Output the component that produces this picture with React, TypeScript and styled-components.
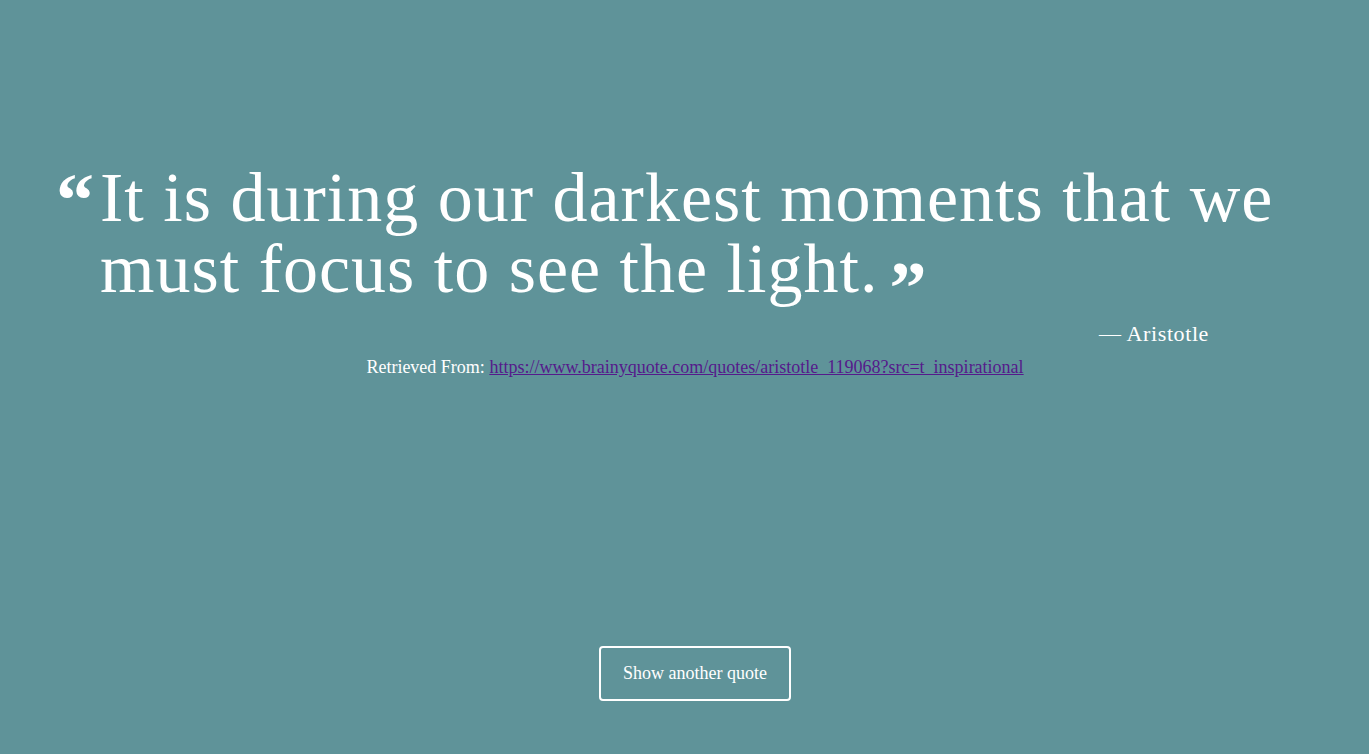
import React from "react";
import styled, { createGlobalStyle } from "styled-components";

const Global = createGlobalStyle`
  html, body { margin: 0; padding: 0; background: #5f9399; }
  body { font-family: "Liberation Serif", "DejaVu Serif", serif; color: #fff; }
`;

const Page = styled.main`
  box-sizing: border-box;
  width: 100%;
  height: 754px;
  padding: 162px 0 0 21px;
  display: flex;
  flex-direction: column;
  align-items: center;
`;

const QuoteBlock = styled.section`
  box-sizing: border-box;
  width: 100%;
  padding: 0 40px 0 35px;
  display: flex;
  align-items: flex-start;
  gap: 6px;
`;

const OpenMark = styled.span`
  display: block;
  font-weight: 700;
  font-size: 76px;
  line-height: 1;
`;

const CloseMark = styled.span`
  display: inline-block;
  font-weight: 700;
  font-size: 74px;
  line-height: 0;
  margin-left: 11px;
  vertical-align: -21px;
  letter-spacing: 0;
`;

const QuoteText = styled.blockquote`
  margin: 0;
  font-size: 70px;
  line-height: 71px;
  letter-spacing: 1px;
`;

const Author = styled.p`
  align-self: flex-end;
  margin: 17px 160px 0 0;
  font-size: 22px;
  letter-spacing: 0.6px;
`;

const Source = styled.p`
  margin: 10px 0 0;
  font-size: 18px;
  a { color: #551a8b; }
`;

const Button = styled.button`
  margin-top: 268px;
  width: 192px;
  height: 55px;
  background: transparent;
  border: 2px solid #fff;
  border-radius: 4px;
  color: #fff;
  font-family: "Liberation Serif", serif;
  font-size: 18px;
  cursor: pointer;
`;

export default function App() {
  return (
    <>
      <Global />
      <Page>
        <QuoteBlock>
          <OpenMark>“</OpenMark>
          <QuoteText>
            It is during our darkest moments that we must focus to see the light.
            <CloseMark>”</CloseMark>
          </QuoteText>
        </QuoteBlock>
        <Author>— Aristotle</Author>
        <Source>
          Retrieved From:{" "}
          <a href="https://www.brainyquote.com/quotes/aristotle_119068?src=t_inspirational">
            https://www.brainyquote.com/quotes/aristotle_119068?src=t_inspirational
          </a>
        </Source>
        <Button>Show another quote</Button>
      </Page>
    </>
  );
}
